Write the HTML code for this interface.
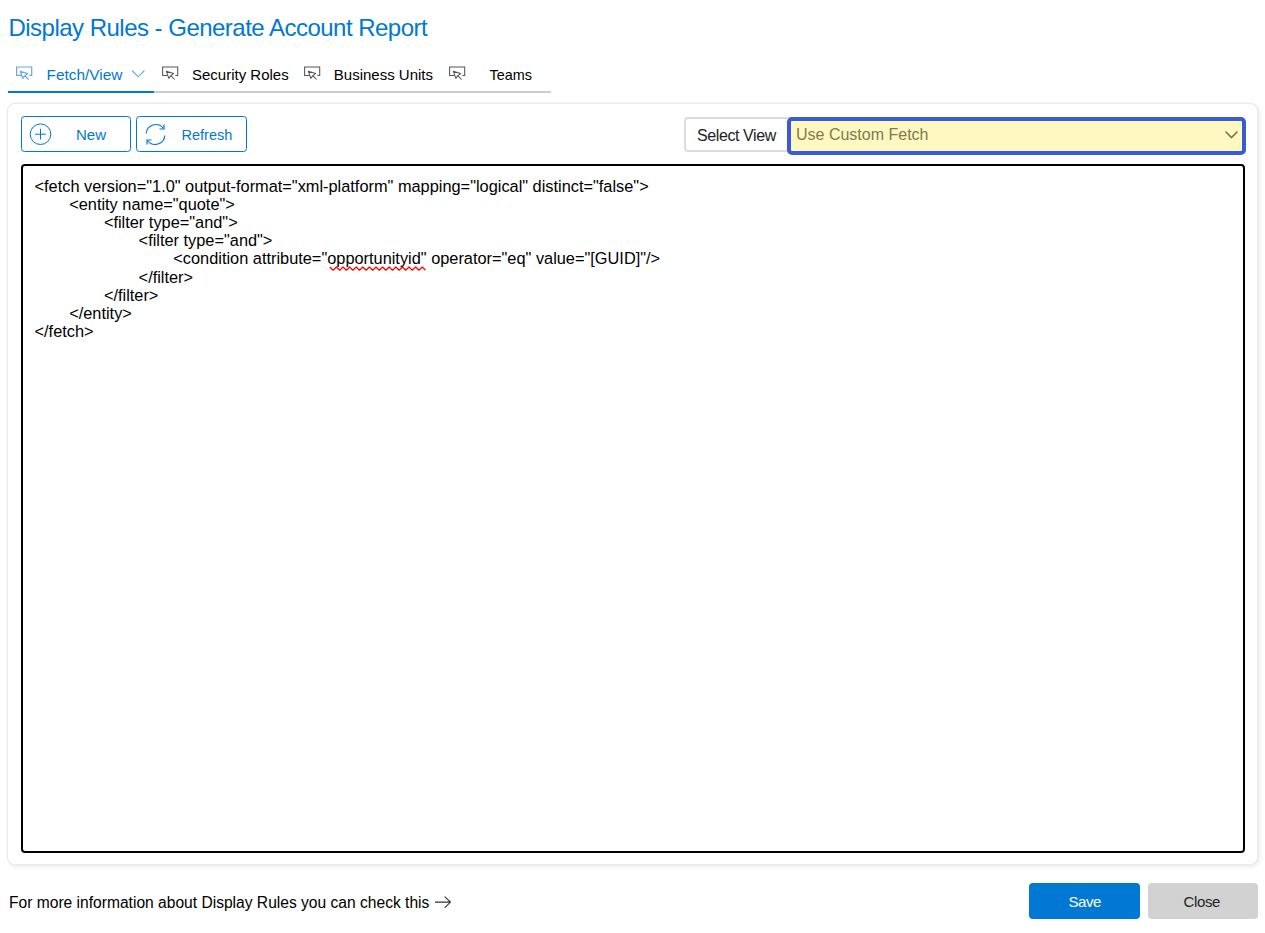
<!DOCTYPE html>
<html><head><meta charset="utf-8">
<style>
*{box-sizing:border-box;margin:0;padding:0}
html,body{width:1265px;height:933px;overflow:hidden;background:#fff;font-family:"Liberation Sans",sans-serif;color:#000}
.a{position:absolute;white-space:pre;line-height:1}
#title{left:8.5px;top:16.3px;font-size:24px;letter-spacing:-0.52px;color:#0078d4}
.tabtxt{font-size:15px;top:67px}
.ico{position:absolute}
#tabline{position:absolute;left:8px;top:91px;width:543px;height:2px;background:#cdcdcd}
#tabsel{position:absolute;left:8px;top:91px;width:146px;height:2px;background:#0078d4}
#card{position:absolute;left:7px;top:103px;width:1251px;height:762px;border-radius:8px;background:#fff;border:1px solid #ebebeb;box-shadow:0 0 2px rgba(0,0,0,.08),2px 2px 5px rgba(0,0,0,.07)}
.btn{position:absolute;top:116px;height:36px;border:1px solid #0078d4;border-radius:3.5px;background:#fff}
.btntxt{font-size:15px;color:#0078d4;top:127.3px}
#lbl{position:absolute;left:684px;top:117px;width:110px;height:35px;border:2px solid #dcdcdc;border-radius:4px;background:#fff}
#sel{position:absolute;left:787px;top:117px;width:459px;height:38px;border:4px solid #3a5bd9;border-radius:5px;background:#fff9c1}
#ta{position:absolute;left:21px;top:164px;width:1224px;height:689px;border:2px solid #000;border-radius:4px;background:#fff}
#code div{white-space:pre}
#foot{left:9px;top:894.9px;font-size:15.6px}
#save{position:absolute;left:1029px;top:883px;width:111px;height:36px;border-radius:4px;background:#0078d4}
#close{position:absolute;left:1148px;top:883px;width:110px;height:36px;border-radius:4px;background:#d2d2d2}
</style></head><body>
<div id="title" class="a">Display Rules - Generate Account Report</div>

<svg class="ico" style="left:11.6px;top:62px" width="24" height="22" viewBox="0 0 24 22"><g fill="none" stroke="#6aa8dc" stroke-width="1.2"><path d="M9.4 13.4H4.6V5H19.7V13.4H17.3"/><path d="M8.3 9.2L15.6 11.6L12.9 13.7L10.8 16.3Z" stroke-linejoin="round"/><path d="M12.9 13.7L16.6 17.5"/></g></svg>
<div class="a tabtxt" style="left:46.5px;font-size:15.4px;top:66.7px;color:#0078d4">Fetch/View</div>
<svg class="ico" style="left:131px;top:69px" width="15" height="10" viewBox="0 0 15 10"><path d="M1 1.5L7.2 7.8L13.4 1.5" fill="none" stroke="#6aa8dc" stroke-width="1.1"/></svg>

<svg class="ico" style="left:158px;top:62px" width="24" height="22" viewBox="0 0 24 22"><g fill="none" stroke="#555" stroke-width="1.05"><path d="M9.4 13.4H4.6V5H19.7V13.4H17.3"/><path d="M8.3 9.2L15.6 11.6L12.9 13.7L10.8 16.3Z" stroke-linejoin="round"/><path d="M12.9 13.7L16.6 17.5"/></g></svg>
<div class="a tabtxt" style="left:192px">Security Roles</div>
<svg class="ico" style="left:300px;top:62px" width="24" height="22" viewBox="0 0 24 22"><g fill="none" stroke="#555" stroke-width="1.05"><path d="M9.4 13.4H4.6V5H19.7V13.4H17.3"/><path d="M8.3 9.2L15.6 11.6L12.9 13.7L10.8 16.3Z" stroke-linejoin="round"/><path d="M12.9 13.7L16.6 17.5"/></g></svg>
<div class="a tabtxt" style="left:333.8px">Business Units</div>
<svg class="ico" style="left:445px;top:62px" width="24" height="22" viewBox="0 0 24 22"><g fill="none" stroke="#555" stroke-width="1.05"><path d="M9.4 13.4H4.6V5H19.7V13.4H17.3"/><path d="M8.3 9.2L15.6 11.6L12.9 13.7L10.8 16.3Z" stroke-linejoin="round"/><path d="M12.9 13.7L16.6 17.5"/></g></svg>
<div class="a tabtxt" style="left:489.5px;font-size:14.4px;top:67.5px">Teams</div>
<div id="tabline"></div><div id="tabsel"></div>

<div id="card"></div>
<div class="btn" style="left:21px;width:110px"></div>
<svg class="ico" style="left:28px;top:122px" width="25" height="25" viewBox="0 0 25 25"><g fill="none" stroke="#0078d4" stroke-width="1.0"><circle cx="12.5" cy="12.2" r="10.3"/><path d="M12.5 6.8V17.6M7.1 12.2H17.9"/></g></svg>
<div class="a btntxt" style="left:76px">New</div>
<div class="btn" style="left:136px;width:111px"></div>
<svg class="ico" style="left:143px;top:122px" width="25" height="25" viewBox="0 0 25 25"><g fill="none" stroke="#0078d4" stroke-width="1.2"><path d="M20.5 6.5A9.6 9.6 0 0 0 3.2 11.5"/><path d="M4.5 18.5A9.6 9.6 0 0 0 21.8 13.5"/><path d="M21 2.5V7H16.5"/><path d="M4 22.5V18H8.5"/></g></svg>
<div class="a btntxt" style="left:181.5px;font-size:14.5px;top:127.7px">Refresh</div>

<div id="lbl"></div>
<div class="a" style="left:697px;top:128.3px;font-size:16px;letter-spacing:-0.4px;color:#222">Select View</div>
<div id="sel"></div>
<div class="a" style="left:796px;top:127.2px;font-size:16px;color:#807a4e">Use Custom Fetch</div>
<svg class="ico" style="left:1224px;top:130px" width="15" height="10" viewBox="0 0 15 10"><path d="M1.5 1.5L7.5 7.5L13.5 1.5" fill="none" stroke="#7a764c" stroke-width="1.6"/></svg>

<div id="ta"></div>
<div id="code" style="position:absolute;left:34.5px;top:177px;font-size:16.35px;line-height:18.11px;color:#000">
<div style="margin-left:0.0px">&lt;fetch version="1.0" output-format="xml-platform" mapping="logical" distinct="false"&gt;</div>
<div style="margin-left:34.7px">&lt;entity name="quote"&gt;</div>
<div style="margin-left:69.4px">&lt;filter type="and"&gt;</div>
<div style="margin-left:104.1px">&lt;filter type="and"&gt;</div>
<div style="margin-left:138.8px">&lt;condition attribute="opportunityid" operator="eq" value="[GUID]"/&gt;</div>
<div style="margin-left:104.1px">&lt;/filter&gt;</div>
<div style="margin-left:69.4px">&lt;/filter&gt;</div>
<div style="margin-left:34.7px">&lt;/entity&gt;</div>
<div style="margin-left:0.0px">&lt;/fetch&gt;</div>
</div>

<svg class="ico" style="left:320px;top:262px" width="110" height="12" viewBox="0 0 110 12"><polyline points="9.8,5.0 13.1,8.2 16.4,5.0 19.7,8.2 23.0,5.0 26.3,8.2 29.6,5.0 32.9,8.2 36.2,5.0 39.5,8.2 42.8,5.0 46.1,8.2 49.4,5.0 52.7,8.2 56.0,5.0 59.3,8.2 62.6,5.0 65.9,8.2 69.2,5.0 72.5,8.2 75.8,5.0 79.1,8.2 82.4,5.0 85.7,8.2 89.0,5.0 92.3,8.2 95.6,5.0 98.9,8.2 102.2,5.0 105.5,8.2" fill="none" stroke="#f00" stroke-width="1.2" stroke-linejoin="round"/></svg>
<div id="foot" class="a">For more information about Display Rules you can check this</div>
<svg class="ico" style="left:434px;top:896px" width="18" height="13" viewBox="0 0 18 13"><path d="M1 6.1H16.6M10.6 0.7L16.5 6.1L10.6 11.8" fill="none" stroke="#333" stroke-width="1.1"/></svg>
<div id="save"></div>
<div class="a" style="left:1068.5px;top:894.4px;font-size:15px;letter-spacing:-0.45px;color:#fff">Save</div>
<div id="close"></div>
<div class="a" style="left:1183.5px;top:894.4px;font-size:15px;letter-spacing:-0.35px;color:#222">Close</div>
</body></html>
